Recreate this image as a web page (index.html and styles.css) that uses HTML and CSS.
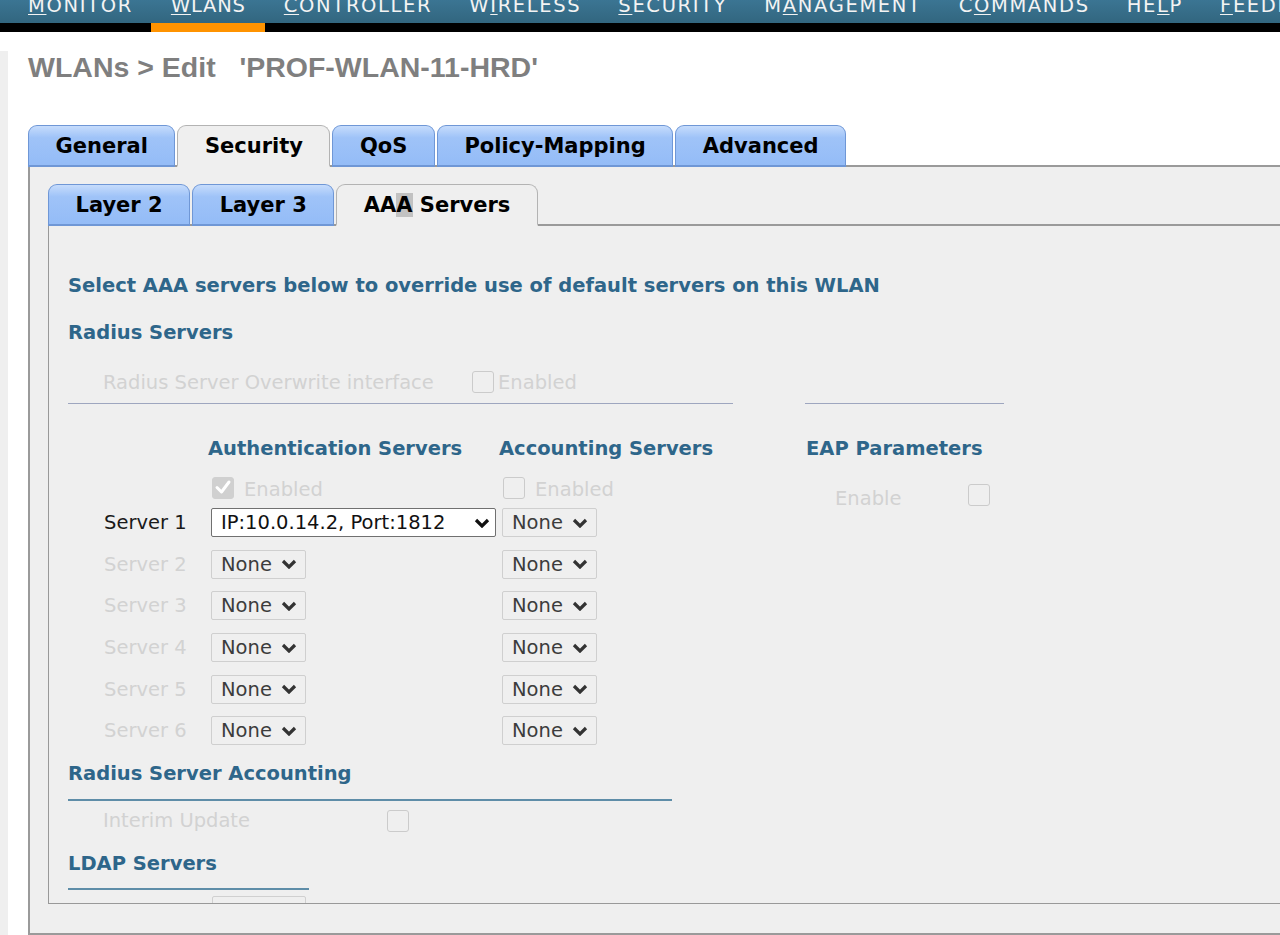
FILE: index.html
```html
<!DOCTYPE html>
<html lang="en">
<head>
<meta charset="utf-8">
<title>WLANs &gt; Edit</title>
<link rel="stylesheet" href="styles.css">
</head>
<body>
<nav class="menu">
  <a class="mi"><span class="t"><u>M</u>ONITOR</span></a>
  <a class="mi active narrow"><span class="t"><u>W</u>LANs</span></a>
  <a class="mi"><span class="t"><u>C</u>ONTROLLER</span></a>
  <a class="mi"><span class="t">W<u>I</u>RELESS</span></a>
  <a class="mi"><span class="t"><u>S</u>ECURITY</span></a>
  <a class="mi"><span class="t">M<u>A</u>NAGEMENT</span></a>
  <a class="mi"><span class="t">C<u>O</u>MMANDS</span></a>
  <a class="mi"><span class="t">HE<u>L</u>P</span></a>
  <a class="mi"><span class="t"><u>F</u>EEDBACK</span></a>
</nav>
<div class="page">
  <h1 class="title">WLANs &gt; Edit&nbsp;&nbsp; 'PROF-WLAN-11-HRD'</h1>
  <div class="tabs">
    <span class="tab">General</span>
    <span class="tab active">Security</span>
    <span class="tab">QoS</span>
    <span class="tab">Policy-Mapping</span>
    <span class="tab">Advanced</span>
  </div>
  <div class="panel">
    <div class="tabs">
      <span class="tab">Layer 2</span>
      <span class="tab">Layer 3</span>
      <span class="tab active">AA<span class="hl">A</span> Servers</span>
    </div>
    <div class="subpanel">
      <div class="intro heading">Select AAA servers below to override use of default servers on this WLAN</div>
      <div class="sec heading">Radius Servers</div>
      <div class="opt-row overwrite">
        <span class="opt-label dis">Radius Server Overwrite interface</span>
        <span class="cb"></span><span class="dis after">Enabled</span>
      </div>
      <div class="rules"><span class="rule r1"></span><span class="rule r2"></span></div>

      <div class="srv-grid">
        <div class="heading c2">Authentication Servers</div>
        <div class="heading c3">Accounting Servers</div>
        <div class="heading c4">EAP Parameters</div>

        <div class="en c2"><span class="cb checked"><svg viewBox="0 0 22 22" width="22" height="22"><path d="M5 11.5 L9.5 16 L17 6" fill="none" stroke="#fff" stroke-width="3" stroke-linecap="round" stroke-linejoin="round"/></svg></span><span class="dis en-t">Enabled</span></div>
        <div class="en c3"><span class="cb"></span><span class="dis en-t">Enabled</span></div>
        <div class="eap"><span class="eap-label dis">Enable</span><span class="cb"></span></div>

        <div class="lbl c1 on">Server 1</div>
        <div class="cell c2"><span class="sel wide">IP:10.0.14.2, Port:1812<svg viewBox="0 0 16 10" width="16" height="10"><path d="M2 2 L8 8 L14 2" fill="none" stroke="#111" stroke-width="3.2"/></svg></span></div>
        <div class="cell c3"><span class="sel">None<svg viewBox="0 0 16 10" width="16" height="10"><path d="M2 2 L8 8 L14 2" fill="none" stroke="#333" stroke-width="3.2"/></svg></span></div>

        <div class="lbl c1 dis">Server 2</div>
        <div class="cell c2"><span class="sel">None<svg viewBox="0 0 16 10" width="16" height="10"><path d="M2 2 L8 8 L14 2" fill="none" stroke="#333" stroke-width="3.2"/></svg></span></div>
        <div class="cell c3"><span class="sel">None<svg viewBox="0 0 16 10" width="16" height="10"><path d="M2 2 L8 8 L14 2" fill="none" stroke="#333" stroke-width="3.2"/></svg></span></div>

        <div class="lbl c1 dis">Server 3</div>
        <div class="cell c2"><span class="sel">None<svg viewBox="0 0 16 10" width="16" height="10"><path d="M2 2 L8 8 L14 2" fill="none" stroke="#333" stroke-width="3.2"/></svg></span></div>
        <div class="cell c3"><span class="sel">None<svg viewBox="0 0 16 10" width="16" height="10"><path d="M2 2 L8 8 L14 2" fill="none" stroke="#333" stroke-width="3.2"/></svg></span></div>

        <div class="lbl c1 dis">Server 4</div>
        <div class="cell c2"><span class="sel">None<svg viewBox="0 0 16 10" width="16" height="10"><path d="M2 2 L8 8 L14 2" fill="none" stroke="#333" stroke-width="3.2"/></svg></span></div>
        <div class="cell c3"><span class="sel">None<svg viewBox="0 0 16 10" width="16" height="10"><path d="M2 2 L8 8 L14 2" fill="none" stroke="#333" stroke-width="3.2"/></svg></span></div>

        <div class="lbl c1 dis">Server 5</div>
        <div class="cell c2"><span class="sel">None<svg viewBox="0 0 16 10" width="16" height="10"><path d="M2 2 L8 8 L14 2" fill="none" stroke="#333" stroke-width="3.2"/></svg></span></div>
        <div class="cell c3"><span class="sel">None<svg viewBox="0 0 16 10" width="16" height="10"><path d="M2 2 L8 8 L14 2" fill="none" stroke="#333" stroke-width="3.2"/></svg></span></div>

        <div class="lbl c1 dis">Server 6</div>
        <div class="cell c2"><span class="sel">None<svg viewBox="0 0 16 10" width="16" height="10"><path d="M2 2 L8 8 L14 2" fill="none" stroke="#333" stroke-width="3.2"/></svg></span></div>
        <div class="cell c3"><span class="sel">None<svg viewBox="0 0 16 10" width="16" height="10"><path d="M2 2 L8 8 L14 2" fill="none" stroke="#333" stroke-width="3.2"/></svg></span></div>
      </div>

      <div class="lined heading acct">Radius Server Accounting</div>
      <div class="opt-row interim">
        <span class="opt-label dis">Interim Update</span>
        <span class="cb"></span>
      </div>
      <div class="lined heading ldap">LDAP Servers</div>
      <div class="peek"></div>
    </div>
  </div>
</div>
</body>
</html>
```

FILE: styles.css
```css
* { box-sizing: border-box; }
html, body { margin: 0; padding: 0; }
body {
  width: 1280px;
  height: 935px;
  overflow: hidden;
  background: #fff;
  font-family: "DejaVu Sans", Verdana, sans-serif;
  font-size: 19.5px;
}

/* top navigation */
.menu {
  display: flex;
  height: 32px;
  padding-left: 9px;
  overflow: hidden;
  background: linear-gradient(to bottom, #3b7593 0, #32667f 23px, #000 23px, #000 32px);
}
.mi {
  flex: 0 0 auto;
  height: 32px;
  padding: 0 18px 0 19px;
  border-bottom: 9px solid transparent;
  color: #f3f3f3;
  font-size: 19.5px;
  letter-spacing: 1.65px;
  text-transform: uppercase;
  white-space: nowrap;
}
.mi.narrow { letter-spacing: 0.8px; padding: 0 19px 0 20px; }
.mi .t { display: block; line-height: 23px; margin-top: -6px; }
.mi u { text-decoration: underline; text-underline-offset: 2px; }
.mi.active { border-bottom-color: #ff9300; }

/* page */
.page {
  height: 903px;
  border-left: 8px solid #efefef;
  padding-left: 20px;
}
.title {
  margin: 19px 0 41px;
  font: bold 28.5px/33px "Liberation Sans", Arial, sans-serif;
  color: #7f7f7f;
  white-space: nowrap;
}

/* tabs */
.tabs {
  display: flex;
  gap: 2px;
  height: 42px;
  box-shadow: inset 0 -2px 0 #9a9a9a;
}
.tab {
  height: 42px;
  padding: 0 26.5px;
  border: 1px solid #6f97d6;
  border-bottom-width: 2px;
  border-radius: 9px 9px 0 0;
  background: linear-gradient(to bottom, #c6dcfc 0%, #9fc3f8 30%, #94bcf7 100%);
  font: bold 21px/41px "DejaVu Sans", Verdana, sans-serif;
  color: #000;
  white-space: nowrap;
}
.tab.active {
  background: #efefef;
  border-color: #b3b3b3;
  border-bottom-color: #efefef;
}
.hl { background: #c2c2c2; }

.panel {
  background: #efefef;
  border-left: 2px solid #9a9a9a;
  border-bottom: 2px solid #9a9a9a;
  padding: 17px 0 29px 18px;
}
.subpanel {
  height: 678px;
  overflow: hidden;
  border-left: 1px solid #999;
  border-bottom: 1px solid #999;
  padding-left: 19px;
}

/* text styles */
.heading {
  font-weight: bold;
  color: #2e668a;
  white-space: nowrap;
}
.dis { color: #d2d2d2; white-space: nowrap; }

.intro { margin-top: 43px; height: 34px; line-height: 34px; }
.sec { margin-top: 15px; height: 30px; line-height: 30px; }

.opt-row {
  display: flex;
  align-items: center;
  height: 40px;
  padding-left: 35px;
}
.overwrite { margin-top: 14px; }
.overwrite .opt-label { width: 369px; }
.interim .opt-label { width: 284px; }
.after { margin-left: 4px; }

.rules { display: flex; height: 1px; margin-top: 1px; }
.rule { height: 1px; background: #9ea6bf; }
.r1 { width: 665px; }
.r2 { width: 199px; margin-left: 72px; }

/* checkbox */
.cb {
  flex: 0 0 auto;
  display: inline-block;
  width: 22px;
  height: 22px;
  border: 1.5px solid #cbcbcb;
  border-radius: 3px;
}
.cb.checked {
  background: #d0d0d0;
  border-color: #d0d0d0;
}
.cb svg { display: block; margin: -1.5px; }

/* servers grid */
.srv-grid {
  display: grid;
  margin-top: 30px;
  grid-template-columns: 140px 291px 307px 1fr;
  grid-template-rows: 30px 38px repeat(6, 41.6px);
  align-items: center;
}
.c1 { grid-column: 1; }
.c2 { grid-column: 2; }
.c3 { grid-column: 3; }
.c4 { grid-column: 4; }
.srv-grid .heading { line-height: 30px; }
.en {
  display: flex;
  align-items: center;
  align-self: stretch;
  padding-top: 9px;
}
.en .cb { margin-left: 4px; }
.en-t { margin-left: 10px; padding-top: 3px; }
.eap {
  grid-column: 4;
  grid-row: 2 / span 2;
  align-self: start;
  display: flex;
  align-items: center;
  margin-top: 15px;
  padding-left: 29px;
}
.eap-label { width: 133px; padding-top: 8px; }
.lbl { padding-left: 36px; white-space: nowrap; }
.lbl.on { color: #1a1a1a; }
.cell { display: flex; align-items: center; }

.sel {
  display: inline-flex;
  align-items: center;
  justify-content: space-between;
  margin-left: 3px;
  width: 95px;
  height: 29px;
  padding: 0 8px 0 9px;
  border: 1px solid #cfcfcf;
  border-radius: 2px;
  color: #3c3c3c;
  white-space: nowrap;
}
.sel svg { flex: 0 0 auto; }
.sel.wide {
  width: 285px;
  padding-right: 5px;
  background: #fff;
  border-color: #707070;
  color: #111;
}

/* lined sub-headings */
.lined {
  height: 42px;
  line-height: 30px;
  border-bottom: 2px solid #5e8da8;
}
.acct { margin-top: 7.4px; width: 604px; }
.ldap { margin-top: 8px; width: 241px; height: 41px; }

.peek {
  margin: 6px 0 0 144px;
  width: 94px;
  height: 28px;
  border: 1px solid #d0d0d0;
  border-radius: 2px;
}
```
